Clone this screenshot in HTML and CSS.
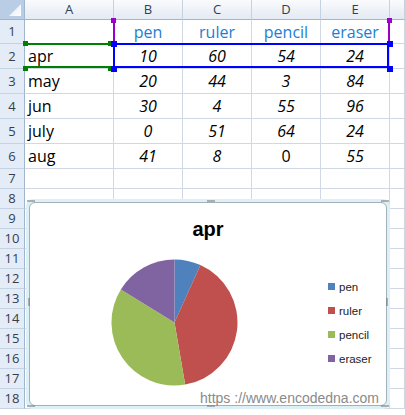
FILE: index.html
```html
<!DOCTYPE html>
<html>
<head>
<meta charset="utf-8">
<link rel="stylesheet" href="styles.css">
</head>
<body>
<div class="sheet">
  <div class="grid">
    <div class="corner"><span class="tri"></span></div>
    <div class="colh">A</div><div class="colh">B</div><div class="colh">C</div><div class="colh">D</div><div class="colh">E</div><div class="colh last"></div>

    <div class="rowh r1">1</div><div class="cell r1"></div><div class="cell r1 hd">pen</div><div class="cell r1 hd">ruler</div><div class="cell r1 hd">pencil</div><div class="cell r1 hd">eraser</div><div class="cell r1"></div>

    <div class="rowh rt">2</div><div class="cell rt lbl">apr</div><div class="cell rt num">10</div><div class="cell rt num">60</div><div class="cell rt num">54</div><div class="cell rt num">24</div><div class="cell rt"></div>
    <div class="rowh rt">3</div><div class="cell rt lbl">may</div><div class="cell rt num">20</div><div class="cell rt num">44</div><div class="cell rt num">3</div><div class="cell rt num">84</div><div class="cell rt"></div>
    <div class="rowh rt">4</div><div class="cell rt lbl">jun</div><div class="cell rt num">30</div><div class="cell rt num">4</div><div class="cell rt num">55</div><div class="cell rt num">96</div><div class="cell rt"></div>
    <div class="rowh rt">5</div><div class="cell rt lbl">july</div><div class="cell rt num">0</div><div class="cell rt num">51</div><div class="cell rt num">64</div><div class="cell rt num">24</div><div class="cell rt"></div>
    <div class="rowh rt">6</div><div class="cell rt lbl">aug</div><div class="cell rt num">41</div><div class="cell rt num">8</div><div class="cell rt num up">0</div><div class="cell rt num">55</div><div class="cell rt"></div>

    <div class="rowh">7</div><div class="cell"></div><div class="cell"></div><div class="cell"></div><div class="cell"></div><div class="cell"></div><div class="cell"></div>
    <div class="rowh">8</div><div class="cell"></div><div class="cell"></div><div class="cell"></div><div class="cell"></div><div class="cell"></div><div class="cell"></div>
    <div class="rowh">9</div><div class="cell"></div><div class="cell"></div><div class="cell"></div><div class="cell"></div><div class="cell"></div><div class="cell"></div>
    <div class="rowh">10</div><div class="cell"></div><div class="cell"></div><div class="cell"></div><div class="cell"></div><div class="cell"></div><div class="cell"></div>
    <div class="rowh">11</div><div class="cell"></div><div class="cell"></div><div class="cell"></div><div class="cell"></div><div class="cell"></div><div class="cell"></div>
    <div class="rowh">12</div><div class="cell"></div><div class="cell"></div><div class="cell"></div><div class="cell"></div><div class="cell"></div><div class="cell"></div>
    <div class="rowh">13</div><div class="cell"></div><div class="cell"></div><div class="cell"></div><div class="cell"></div><div class="cell"></div><div class="cell"></div>
    <div class="rowh">14</div><div class="cell"></div><div class="cell"></div><div class="cell"></div><div class="cell"></div><div class="cell"></div><div class="cell"></div>
    <div class="rowh">15</div><div class="cell"></div><div class="cell"></div><div class="cell"></div><div class="cell"></div><div class="cell"></div><div class="cell"></div>
    <div class="rowh">16</div><div class="cell"></div><div class="cell"></div><div class="cell"></div><div class="cell"></div><div class="cell"></div><div class="cell"></div>
    <div class="rowh">17</div><div class="cell"></div><div class="cell"></div><div class="cell"></div><div class="cell"></div><div class="cell"></div><div class="cell"></div>
    <div class="rowh">18</div><div class="cell"></div><div class="cell"></div><div class="cell"></div><div class="cell"></div><div class="cell"></div><div class="cell"></div>
  </div>

  <!-- selection overlays -->
  <div class="sel-purple sp-left"></div>
  <div class="sel-purple sp-right"></div>
  <div class="sel-green"></div>
  <div class="sel-blue"></div>
  <span class="h hp" style="left:111px;top:18px"></span>
  <span class="h hp" style="left:387px;top:18px"></span>
  <span class="h hg" style="left:23px;top:41px"></span>
  <span class="h hg" style="left:23px;top:66px"></span>
  <span class="h hg" style="left:108px;top:41px"></span>
  <span class="h hg" style="left:108px;top:66px"></span>
  <span class="h hb" style="left:111px;top:41px"></span>
  <span class="h hb" style="left:111px;top:66px"></span>
  <span class="h hb" style="left:387px;top:41px"></span>
  <span class="h hb" style="left:387px;top:66px"></span>

  <!-- chart -->
  <div class="chart">
    <div class="chart-inner">
      <div class="title">apr</div>
      <div class="plot">
        <svg class="pie" width="127" height="127" viewBox="-63.5 -63.5 127 127">
          <path fill="#4f81bd" d="M0 0 L0 -63 A63 63 0 0 1 25.95 -57.41 Z"/>
          <path fill="#c0504d" d="M0 0 L25.95 -57.41 A63 63 0 0 1 10.65 62.09 Z"/>
          <path fill="#9bbb59" d="M0 0 L10.65 62.09 A63 63 0 0 1 -53.66 -33.03 Z"/>
          <path fill="#8064a2" d="M0 0 L-53.66 -33.03 A63 63 0 0 1 0 -63 Z"/>
        </svg>
        <ul class="legend">
          <li><i class="sw pen"></i>pen</li>
          <li><i class="sw ruler"></i>ruler</li>
          <li><i class="sw pencil"></i>pencil</li>
          <li><i class="sw eraser"></i>eraser</li>
        </ul>
      </div>
    </div>
    <span class="dots dh" style="left:-2px;top:-2px"></span>
    <span class="dots dh" style="left:178px;top:-2px"></span>
    <span class="dots dh" style="right:-2px;top:-2px"></span>
    <span class="dots dv" style="right:-1px;top:96px"></span>
    <span class="dots dv" style="left:-1px;top:96px"></span>
    <span class="dots dh" style="left:-2px;bottom:-1px"></span>
    <span class="dots dh" style="left:178px;bottom:-1px"></span>
    <span class="dots dh" style="right:-2px;bottom:-1px"></span>
  </div>
  <div class="watermark">https ://www.encodedna.com</div>
</div>
</body>
</html>
```

FILE: styles.css
```css
html, body {
  margin: 0;
  padding: 0;
  background: #ffffff;
  overflow: hidden;
}

.sheet {
  position: relative;
  width: 405px;
  height: 415px;
  font-family: "Open Sans", "Liberation Sans", sans-serif;
}

.grid {
  display: grid;
  grid-template-columns: 25px 89px 69px 69px 69px 69px 1fr;
  grid-template-rows: 20px 24px repeat(5, 25px) repeat(12, 20px);
}

.grid > div {
  box-sizing: border-box;
}

.corner {
  position: relative;
  background: #b9cde5;
  border-right: 1px solid #9eb6ce;
  border-bottom: 1px solid #9eb6ce;
}

.tri {
  position: absolute;
  right: 3px;
  bottom: 3px;
  width: 12px;
  height: 12px;
  background: linear-gradient(135deg, #dfe8f4, #ffffff);
  clip-path: polygon(100% 0, 100% 100%, 0 100%);
}

.colh {
  background: linear-gradient(#f9fbfd, #e4eaf3);
  border-right: 1px solid #c5d2e1;
  border-bottom: 1px solid #9eb6ce;
  color: #333f4f;
  font-size: 13px;
  line-height: 19px;
  text-align: center;
}

.rowh {
  background: #e4ecf7;
  border-right: 1px solid #9eb6ce;
  border-bottom: 1px solid #c5d2e1;
  color: #333f4f;
  font-size: 13px;
  line-height: 19px;
  text-align: center;
  display: flex;
  align-items: center;
  justify-content: center;
}

.cell {
  border-right: 1px solid #d0d7e5;
  border-bottom: 1px solid #d0d7e5;
  font-size: 16px;
  color: #000;
  display: flex;
  align-items: center;
  justify-content: center;
  white-space: nowrap;
}

.cell.hd {
  color: #1c7ed3;
}

.cell.lbl {
  justify-content: flex-start;
  padding-left: 3px;
}

.cell.num {
  font-style: italic;
}

.cell.num.up {
  font-style: normal;
}

/* selection */
.sel-blue {
  position: absolute;
  left: 113px;
  top: 43px;
  width: 276px;
  height: 25px;
  box-sizing: border-box;
  border: 2px solid #0000ff;
}

.sel-green {
  position: absolute;
  left: 25px;
  top: 43px;
  width: 89px;
  height: 25px;
  box-sizing: border-box;
  border-top: 2px solid #008000;
  border-bottom: 2px solid #008000;
}

.sel-purple {
  position: absolute;
  top: 20px;
  width: 2px;
  height: 24px;
  background: #9900cc;
}

.sp-left { left: 113px; }
.sp-right { left: 388px; }

.h {
  position: absolute;
  width: 5px;
  height: 5px;
}

.hp { background: #9900cc; }
.hg { background: #008000; }
.hb { background: #0000ff; width: 6px; height: 6px; }

/* chart */
.chart {
  position: absolute;
  left: 26px;
  top: 199px;
  width: 364px;
  height: 210px;
  box-sizing: border-box;
  border: 3px solid #dcf0f5;
  border-radius: 7px;
  background: #dcf0f5;
}

.chart-inner {
  box-sizing: border-box;
  height: 100%;
  background: #ffffff;
  border: 1px solid #a2b0ba;
  border-radius: 6px;
}

.title {
  font-family: "Liberation Sans", Arial, sans-serif;
  font-weight: bold;
  font-size: 20px;
  line-height: 24px;
  text-align: center;
  padding-top: 14px;
  color: #000;
}

.plot {
  display: flex;
  align-items: center;
  margin-top: 18px;
  padding-left: 81px;
}

.pie {
  display: block;
}

.legend {
  list-style: none;
  margin: 0 0 0 90px;
  padding: 0;
  font-family: "Liberation Sans", Arial, sans-serif;
  font-size: 11.5px;
  color: #222;
}

.legend li {
  display: flex;
  align-items: center;
  height: 24px;
}

.sw {
  width: 7px;
  height: 7px;
  margin-right: 4px;
}

.sw.pen { background: #4f81bd; }
.sw.ruler { background: #c0504d; }
.sw.pencil { background: #9bbb59; }
.sw.eraser { background: #8064a2; }

.dots {
  position: absolute;
}

.dh {
  width: 8px;
  height: 2px;
  background: radial-gradient(circle, #707070 45%, transparent 55%) 0 0 / 2px 2px;
}

.dv {
  width: 2px;
  height: 8px;
  background: radial-gradient(circle, #707070 45%, transparent 55%) 0 0 / 2px 2px;
}

.watermark {
  position: absolute;
  left: 200px;
  top: 389px;
  font-family: "Liberation Sans", Arial, sans-serif;
  font-size: 14px;
  line-height: 18px;
  color: #8a8a8a;
  white-space: nowrap;
}
```
